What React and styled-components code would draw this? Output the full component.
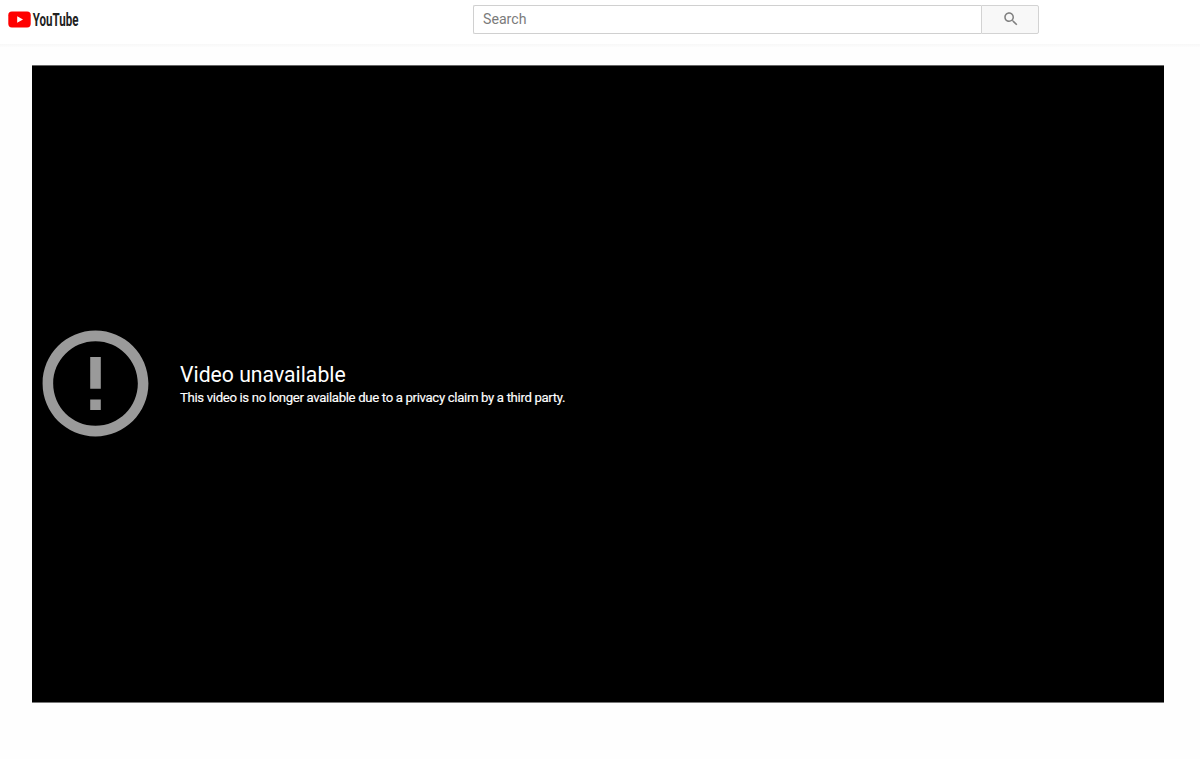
import React from 'react';
import styled, { createGlobalStyle } from 'styled-components';

const GlobalStyle = createGlobalStyle`
  * {
    box-sizing: border-box;
  }

  body {
    margin: 0;
    background: #fefefe;
    font-family: Roboto, "Liberation Sans", sans-serif;
  }
`;

const Page = styled.div`
  height: 759px;
  overflow: hidden;
`;

const Header = styled.header`
  display: flex;
  align-items: flex-start;
  height: 44px;
  padding: 5px 161px 0 8px;
  background: #fff;
`;

const HeaderShadow = styled.div`
  height: 3px;
  background: linear-gradient(#f8f8f8, #fcfcfc);
`;

const LogoLink = styled.a`
  display: flex;
  width: 110px;
  margin-top: 2px;
  margin-right: auto;

  svg {
    display: block;
  }
`;

const SearchForm = styled.form`
  display: flex;
  width: 566px;
  height: 29px;
`;

const SearchInput = styled.input`
  flex: 1;
  min-width: 0;
  padding: 0 9px 1px;
  border: 1px solid #d0d0d0;
  border-right: none;
  border-radius: 2px 0 0 2px;
  outline: none;
  background: #fff;
  font-family: inherit;
  font-size: 14.15px;

  &::placeholder {
    color: #7b7b7b;
    opacity: 1;
  }
`;

const SearchButton = styled.button`
  display: flex;
  align-items: center;
  justify-content: center;
  width: 58px;
  padding: 0 0 1px 1px;
  border: 1px solid #d3d3d3;
  border-radius: 0 2px 2px 0;
  background: #f8f8f8;
`;

const Player = styled.main`
  display: flex;
  align-items: center;
  width: 1132px;
  height: 638px;
  margin: 18px 0 0 32px;
  border-top: 1px solid #666;
  border-bottom: 1px solid #777;
  background: #000;
`;

const ErrorIcon = styled.svg`
  flex: none;
  width: 127px;
  height: 127px;
  margin: 0 21px 1px 0;
  fill: #9a9a9a;
`;

const Reason = styled.h1`
  margin: 2px 0 0;
  color: #fff;
  font-size: 21.2px;
  font-weight: 400;
  line-height: 25px;
`;

const Subreason = styled.p`
  margin: 0;
  color: #fff;
  font-size: 13.2px;
  letter-spacing: -0.34px;
  line-height: 21px;
  -webkit-text-stroke: 0.15px #fff;
`;

const Logo = () => (
  <svg width="110" height="26" viewBox="0 0 110 26">
    <rect x="0.3" y="4.6" width="22.4" height="15.8" rx="3.6" fill="#f00" />
    <path d="M9.2 9.2v6.6l5.8-3.3z" fill="#fff" />
    <text
      x="24.8"
      y="19.1"
      fill="#212121"
      fontFamily="Roboto, sans-serif"
      fontSize="17.8"
      fontWeight="700"
      textLength="45.7"
      lengthAdjust="spacingAndGlyphs"
    >
      YouTube
    </text>
  </svg>
);

const SearchIcon = () => (
  <svg width="18" height="18" viewBox="0 0 24 24" fill="#808080">
    <path d="M15.5 14h-.79l-.28-.27C15.41 12.59 16 11.11 16 9.5 16 5.91 13.09 3 9.5 3S3 5.91 3 9.5 5.91 16 9.5 16c1.61 0 3.09-.59 4.23-1.57l.27.28v.79l5 4.99L20.49 19l-4.99-5zm-6 0C7.01 14 5 11.99 5 9.5S7.01 5 9.5 5 14 7.01 14 9.5 11.99 14 9.5 14z" />
  </svg>
);

const App = () => (
  <Page>
    <GlobalStyle />
    <Header>
      <LogoLink aria-label="YouTube">
        <Logo />
      </LogoLink>
      <SearchForm>
        <SearchInput placeholder="Search" />
        <SearchButton type="button" aria-label="Search">
          <SearchIcon />
        </SearchButton>
      </SearchForm>
    </Header>
    <HeaderShadow />

    <Player>
      <ErrorIcon viewBox="0 0 24 24">
        <path d="M11 15h2v2h-2zm0-8h2v6h-2zm.99-5C6.47 2 2 6.48 2 12s4.47 10 9.99 10C17.52 22 22 17.52 22 12S17.52 2 11.99 2zM12 20c-4.42 0-8-3.58-8-8s3.58-8 8-8 8 3.58 8 8-3.58 8-8 8z" />
      </ErrorIcon>
      <div>
        <Reason>Video unavailable</Reason>
        <Subreason>This video is no longer available due to a privacy claim by a third party.</Subreason>
      </div>
    </Player>
  </Page>
);

export default App;
